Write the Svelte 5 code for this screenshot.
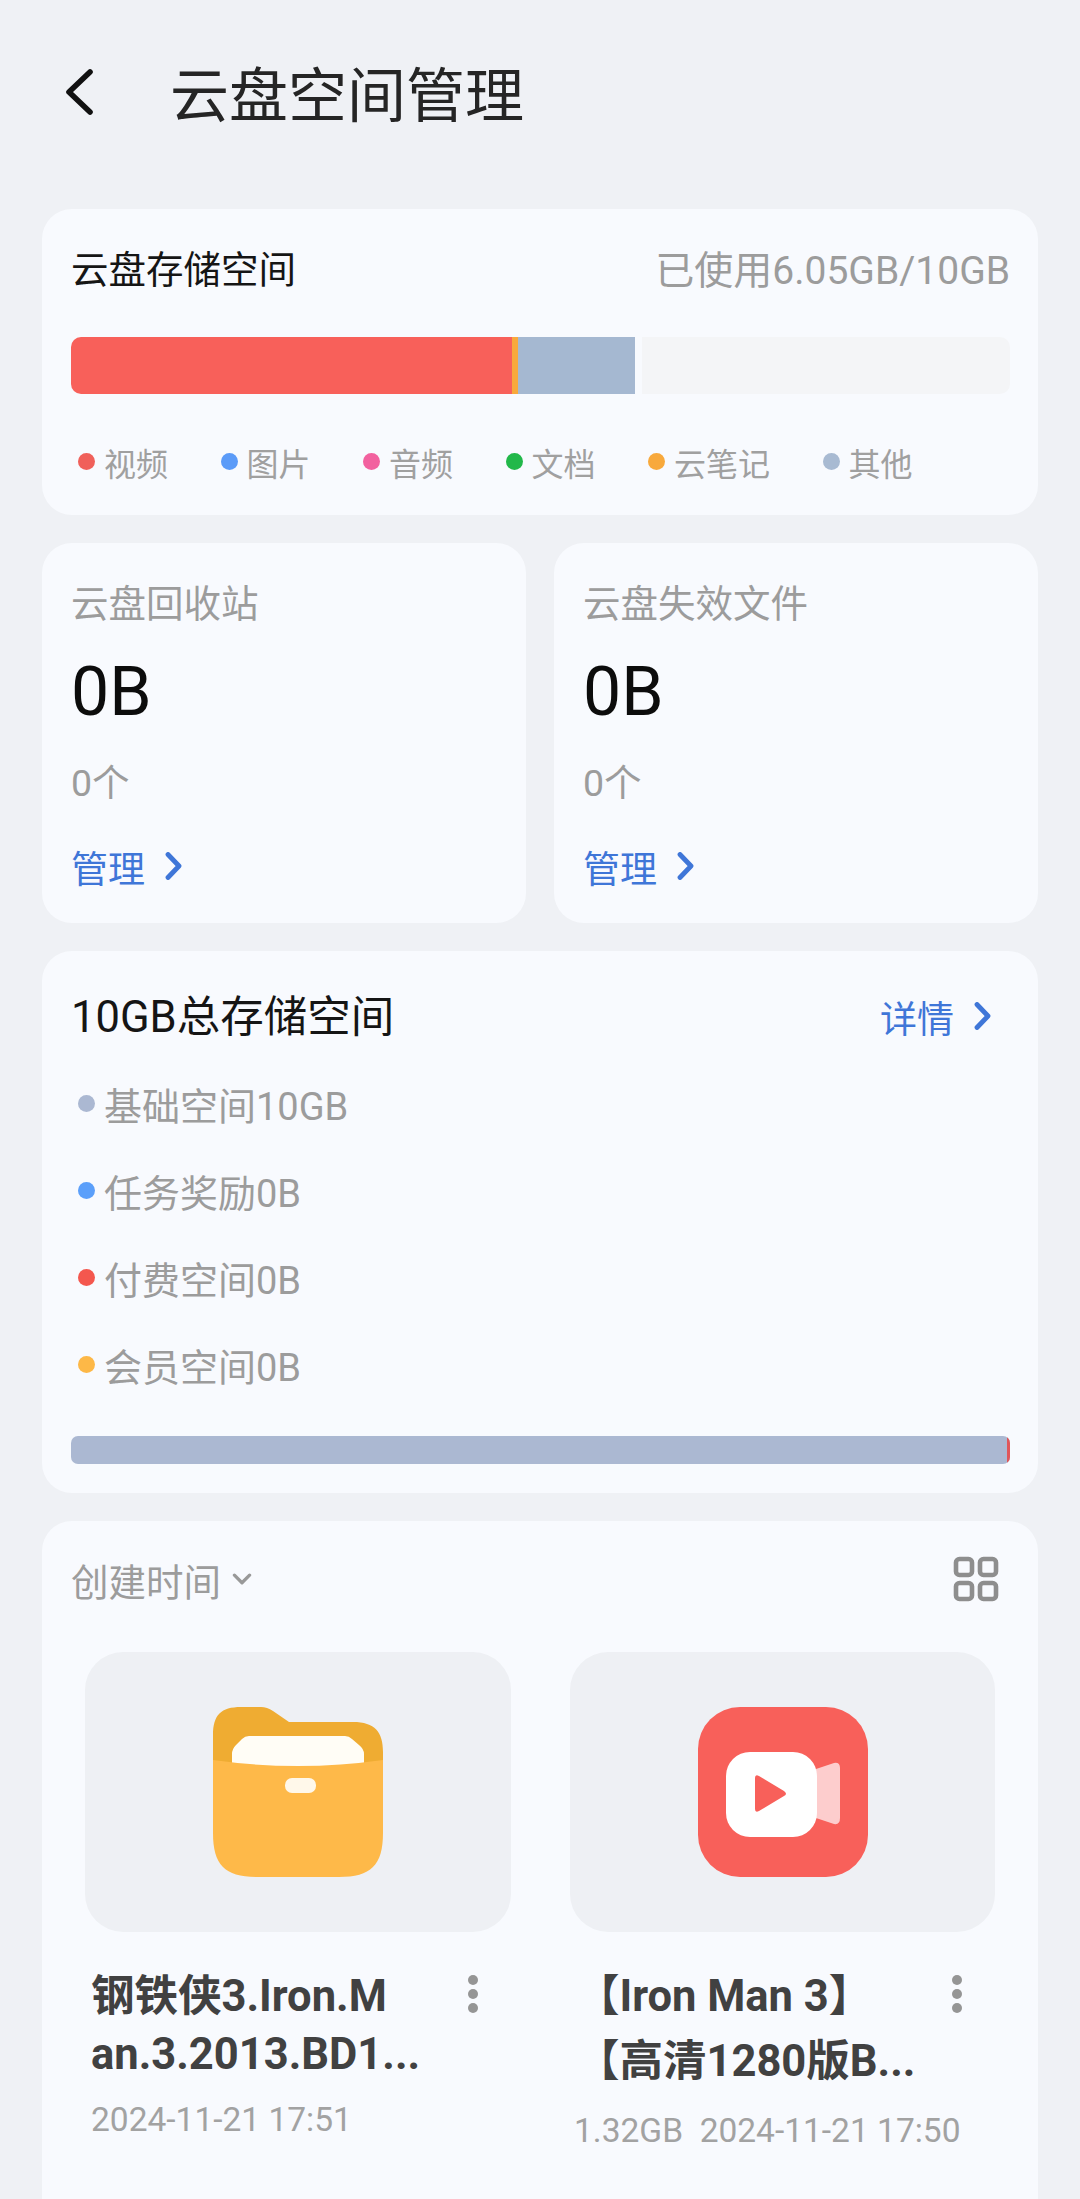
<script>
const legend = [
  { label: '视频', color: '#f0605a' },
  { label: '图片', color: '#5b9bf8' },
  { label: '音频', color: '#f2619f' },
  { label: '文档', color: '#22b84a' },
  { label: '云笔记', color: '#f8a93c' },
  { label: '其他', color: '#a8bad2' }
]

const quota = [
  { label: '基础空间10GB', color: '#abb8d2' },
  { label: '任务奖励0B', color: '#5b9ffa' },
  { label: '付费空间0B', color: '#f4574e' },
  { label: '会员空间0B', color: '#fdb847' }
]

const bins = [
  { title: '云盘回收站', size: '0B', count: '0个' },
  { title: '云盘失效文件', size: '0B', count: '0个' }
]
</script>

<div class="page">
  <header class="topbar">
    <svg class="back" viewBox="0 0 30 46" width="30" height="46">
      <path d="M26 3 L5 23 L26 43" fill="none" stroke="#111" stroke-width="5.6" stroke-linecap="round" stroke-linejoin="round" />
    </svg>
    <h1>云盘空间管理</h1>
  </header>

  <main class="cards">
    <section class="card usage">
      <div class="row">
        <span class="heading small">云盘存储空间</span>
        <span class="muted used-text">已使用6.05GB/10GB</span>
      </div>
      <div class="bar">
        <div class="used">
          <i class="seg-video"></i>
          <i class="seg-note"></i>
          <i class="seg-other"></i>
        </div>
        <div class="free"></div>
      </div>
      <ul class="legend">
        {#each legend as item}
          <li><i class="dot" style="background: {item.color}"></i><span>{item.label}</span></li>
        {/each}
      </ul>
    </section>

    <div class="pair">
      {#each bins as bin}
        <section class="card bin">
          <div class="muted">{bin.title}</div>
          <div class="size">{bin.size}</div>
          <div class="muted count">{bin.count}</div>
          <div class="link">
            <span>管理</span>
            <svg viewBox="0 0 20 28" width="20" height="28">
              <path d="M5 2.5 L16 14 L5 25.5" fill="none" stroke="#3f76d8" stroke-width="4.8" stroke-linecap="round" stroke-linejoin="round" />
            </svg>
          </div>
        </section>
      {/each}
    </div>

    <section class="card total">
      <div class="row">
        <span class="heading">10GB总存储空间</span>
        <div class="link detail">
          <span>详情</span>
          <svg viewBox="0 0 20 28" width="20" height="28">
            <path d="M5 2.5 L16 14 L5 25.5" fill="none" stroke="#3f76d8" stroke-width="4.8" stroke-linecap="round" stroke-linejoin="round" />
          </svg>
        </div>
      </div>
      <ul class="quota">
        {#each quota as item}
          <li><i class="dot" style="background: {item.color}"></i><span>{item.label}</span></li>
        {/each}
      </ul>
      <div class="total-bar"><i></i></div>
    </section>

    <section class="card files">
      <div class="row">
        <div class="sort">
          <span class="muted">创建时间</span>
          <svg viewBox="0 0 20 12" width="22" height="13">
            <path d="M3 2 L10 9 L17 2" fill="none" stroke="#999" stroke-width="3" stroke-linecap="round" stroke-linejoin="round" />
          </svg>
        </div>
        <svg class="grid-icon" viewBox="0 0 46 46" width="46" height="46">
          <g fill="none" stroke="#8e8e8e" stroke-width="4.6">
            <rect x="3" y="3" width="16" height="16" rx="3.5" />
            <rect x="27" y="3" width="16" height="16" rx="3.5" />
            <rect x="3" y="27" width="16" height="16" rx="3.5" />
            <rect x="27" y="27" width="16" height="16" rx="3.5" />
          </g>
        </svg>
      </div>

      <div class="file-grid">
        <article class="file">
          <div class="thumb">
            <svg viewBox="0 0 170 170" width="170" height="170">
              <path d="M0 28 C0 8 8 0 28 0 H48 Q54 0 60 4 L76 15 H140 C162 15 170 25 170 45 V62 H0 Z" fill="#efac32" />
              <path d="M19 47 Q19 42 23 38 L29 32 Q32 29 36 29 H132 Q136 29 139 32 L146 38 Q151 42 151 47 V70 H19 Z" fill="#fffdf6" />
              <path d="M0 53 Q85 65 170 53 V126 C170 158 158 170 126 170 H44 C12 170 0 158 0 126 Z" fill="#feb949" />
              <rect x="72" y="71" width="31" height="15" rx="7" fill="#fff8ea" />
            </svg>
          </div>
          <div class="file-info">
            <div class="name">
              <div>钢铁侠3.Iron.M</div>
              <div>an.3.2013.BD1...</div>
            </div>
            <div class="kebab"><i></i><i></i><i></i></div>
          </div>
          <div class="meta">2024-11-21 17:51</div>
        </article>

        <article class="file">
          <div class="thumb">
            <svg viewBox="0 0 170 170" width="170" height="170">
              <rect width="170" height="170" rx="42" fill="#f8605a" />
              <path d="M118 62 L136 56 Q142 55 142 61 V111 Q142 118 136 117 L118 111 Z" fill="#fdcdcd" />
              <rect x="28" y="45" width="91" height="85" rx="24" fill="#fff" />
              <path d="M57 71 Q57 67 61 69 L86 84 Q90 87 86 89 L61 104 Q57 106 57 102 Z" fill="#f8605a" />
            </svg>
          </div>
          <div class="file-info">
            <div class="name tall">
              <div>【Iron Man 3】</div>
              <div>【高清1280版B...</div>
            </div>
            <div class="kebab"><i></i><i></i><i></i></div>
          </div>
          <div class="meta wide">1.32GB&nbsp;&nbsp;2024-11-21 17:50</div>
        </article>
      </div>
    </section>
  </main>
</div>

<style>
:global(body) {
  margin: 0;
  background: #eff1f5;
}

.page {
  height: 2199px;
  overflow: hidden;
  font-family: Roboto, "Noto Sans CJK SC", sans-serif;
  color: #1c1c1c;
  background: #eff1f5;
}

.topbar {
  display: flex;
  align-items: center;
  height: 190px;
  padding: 0 0 0 64px;
  box-sizing: border-box;
}

.back {
  margin-right: 76px;
  margin-top: -6px;
}

h1 {
  margin: 0 0 8px;
  font-size: 59px;
  font-weight: 400;
  color: #252525;
}

.cards {
  display: flex;
  flex-direction: column;
  gap: 28px;
  padding: 19px 42px 0;
}

.card {
  background: #f8fafe;
  border-radius: 30px;
  box-sizing: border-box;
}

.row {
  display: flex;
  justify-content: space-between;
  align-items: center;
  height: 52px;
}

.heading {
  font-size: 43.5px;
  color: #151515;
  margin-top: -7px;
}

.heading.small {
  font-size: 37.5px;
}

.muted {
  font-size: 37.5px;
  color: #9c9c9c;
}

.used-text {
  font-size: 39px;
  margin-top: -7px;
}

i {
  display: block;
}

.usage {
  height: 306px;
  padding: 35px 28px 0 29px;
}

.bar {
  display: flex;
  gap: 7px;
  height: 57px;
  margin-top: 41px;
}

.used {
  display: flex;
  width: 564px;
  border-radius: 10px 0 0 10px;
  overflow: hidden;
}

.seg-video {
  width: 441px;
  background: #f8605a;
}

.seg-note {
  width: 6px;
  background: #f8a93c;
}

.seg-other {
  flex: 1;
  background: #a5b8d1;
}

.free {
  flex: 1;
  background: #f4f5f7;
  border-radius: 0 10px 10px 0;
}

.legend {
  display: flex;
  gap: 52.5px;
  margin: 0;
  padding: 45px 0 0 7px;
  list-style: none;
  font-size: 32px;
  color: #a0a0a0;
}

.legend li, .quota li {
  display: flex;
  align-items: center;
  gap: 9px;
}

.dot {
  width: 17px;
  height: 17px;
  border-radius: 50%;
  margin-top: -1px;
}

.pair {
  display: grid;
  grid-template-columns: 1fr 1fr;
  gap: 28px;
}

.bin {
  height: 380px;
  padding: 30px 29px 0;
}

.size {
  font-size: 68px;
  line-height: 80px;
  margin-top: 24px;
  color: #0c0c0c;
}

.count {
  margin-top: 20px;
}

.link {
  display: flex;
  align-items: center;
  gap: 18px;
  margin-top: 33px;
  font-size: 37px;
  color: #3f76d8;
}

.link svg {
  margin-top: -3px;
}

.total {
  height: 542px;
  padding: 40px 28px 0 29px;
}

.detail {
  margin-top: 0;
  margin-right: 18px;
}

.quota {
  margin: 0;
  padding: 17px 0 0 7px;
  list-style: none;
  font-size: 38px;
  color: #9c9c9c;
}

.quota li {
  height: 87px;
}

.total-bar {
  display: flex;
  justify-content: flex-end;
  height: 28px;
  margin-top: 28px;
  background: #abb8d2;
  border-radius: 7px;
  overflow: hidden;
}

.total-bar i {
  width: 3px;
  background: #e0565a;
}

.files {
  height: 800px;
  padding: 32px 28px 0 29px;
}

.sort {
  display: flex;
  align-items: center;
  gap: 10px;
}

.grid-icon {
  margin-right: 11px;
}

.file-grid {
  display: grid;
  grid-template-columns: 426px 425px;
  gap: 59px;
  margin: 47px 0 0 14px;
}

.thumb {
  display: flex;
  align-items: center;
  justify-content: center;
  height: 280px;
  background: #eef0f4;
  border-radius: 38px;
}

.file-info {
  display: flex;
  justify-content: space-between;
  margin-top: 36px;
  padding-left: 6px;
}

.name {
  font-size: 43.5px;
  font-weight: 700;
  line-height: 58px;
  color: #414141;
  white-space: nowrap;
}

.name.tall div + div {
  margin-top: 7px;
}

.kebab {
  display: flex;
  flex-direction: column;
  gap: 4px;
  margin: 7px 33px 0 0;
}

.kebab i {
  width: 10px;
  height: 10px;
  border-radius: 50%;
  background: #959595;
}

.meta {
  margin-top: 17px;
  padding-left: 6px;
  font-size: 33.5px;
  line-height: 38px;
  color: #a2a2a2;
}

.meta.wide {
  margin-top: 21px;
  padding-left: 4px;
}
</style>
